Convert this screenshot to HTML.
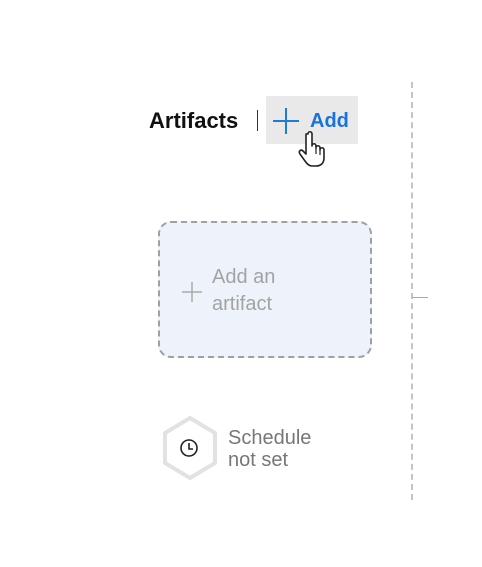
<!DOCTYPE html>
<html><head><meta charset="utf-8"><style>
html,body{margin:0;padding:0;background:#fff;width:482px;height:567px;overflow:hidden;position:relative;font-family:"Segoe UI","Liberation Sans",sans-serif}
.abs{position:absolute}
</style></head><body>
<div class="abs" style="left:149px;top:106px;font-size:22px;font-weight:bold;color:#111;line-height:30px">Artifacts</div>
<div class="abs" style="left:257px;top:110px;width:1px;height:21px;background:#333"></div>
<div class="abs" style="left:266px;top:96px;width:92px;height:48px;background:#e9e9e9"></div>
<svg class="abs" style="left:272px;top:107px" width="28" height="28"><path d="M14 1V27M1 14H27" stroke="#1f7ad9" stroke-width="2"/></svg>
<div class="abs" style="left:310px;top:106px;font-size:20px;font-weight:bold;color:#1a73d9;line-height:30px">Add</div>
<svg class="abs" style="left:298px;top:130px" width="34" height="38" viewBox="0 0 34 38"><path d="M10 4c0-3 4-3 4 0v12c0-3 4-3 4 0v2c0-3 4-3 4 0v2c0-3 4-3 4 0v8c0 5-3 8-8 8h-4c-3 0-5-2-7-5l-5-7c-2-3 1-5 3-3l3 3V4z" fill="#fff" stroke="#222" stroke-width="1.6" stroke-linejoin="round"/><path d="M18 18v6M22 20v5" stroke="#222" stroke-width="1.2"/></svg>
<div class="abs" style="left:158px;top:221px;width:210px;height:133px;border:2px dashed #a0a0a0;border-radius:13px;background:#eef3fb"></div>
<svg class="abs" style="left:181px;top:281px" width="22" height="22"><path d="M11 1V21M1 11H21" stroke="#aaa" stroke-width="1.5"/></svg>
<div class="abs" style="left:212px;top:264px;font-size:20px;color:#a3a3a3;line-height:27px">Add an<br>artifact</div>
<div class="abs" style="left:411px;top:82px;height:418px;border-left:2px dashed #c4c4c4"></div>
<div class="abs" style="left:412px;top:297px;width:16px;height:1px;background:#aaa"></div>
<svg class="abs" style="left:160px;top:415px" width="60" height="66" viewBox="0 0 60 66"><polygon points="30,3 55,18 55,48 30,63 5,48 5,18" fill="#fff" stroke="#e2e2e2" stroke-width="4"/><circle cx="29" cy="33" r="8" fill="none" stroke="#222" stroke-width="1.6"/><path d="M29 28V34H33" fill="none" stroke="#222" stroke-width="1.6"/></svg>
<div class="abs" style="left:228px;top:427px;font-size:20px;color:#777;line-height:22px">Schedule<br>not set</div>
</body></html>
